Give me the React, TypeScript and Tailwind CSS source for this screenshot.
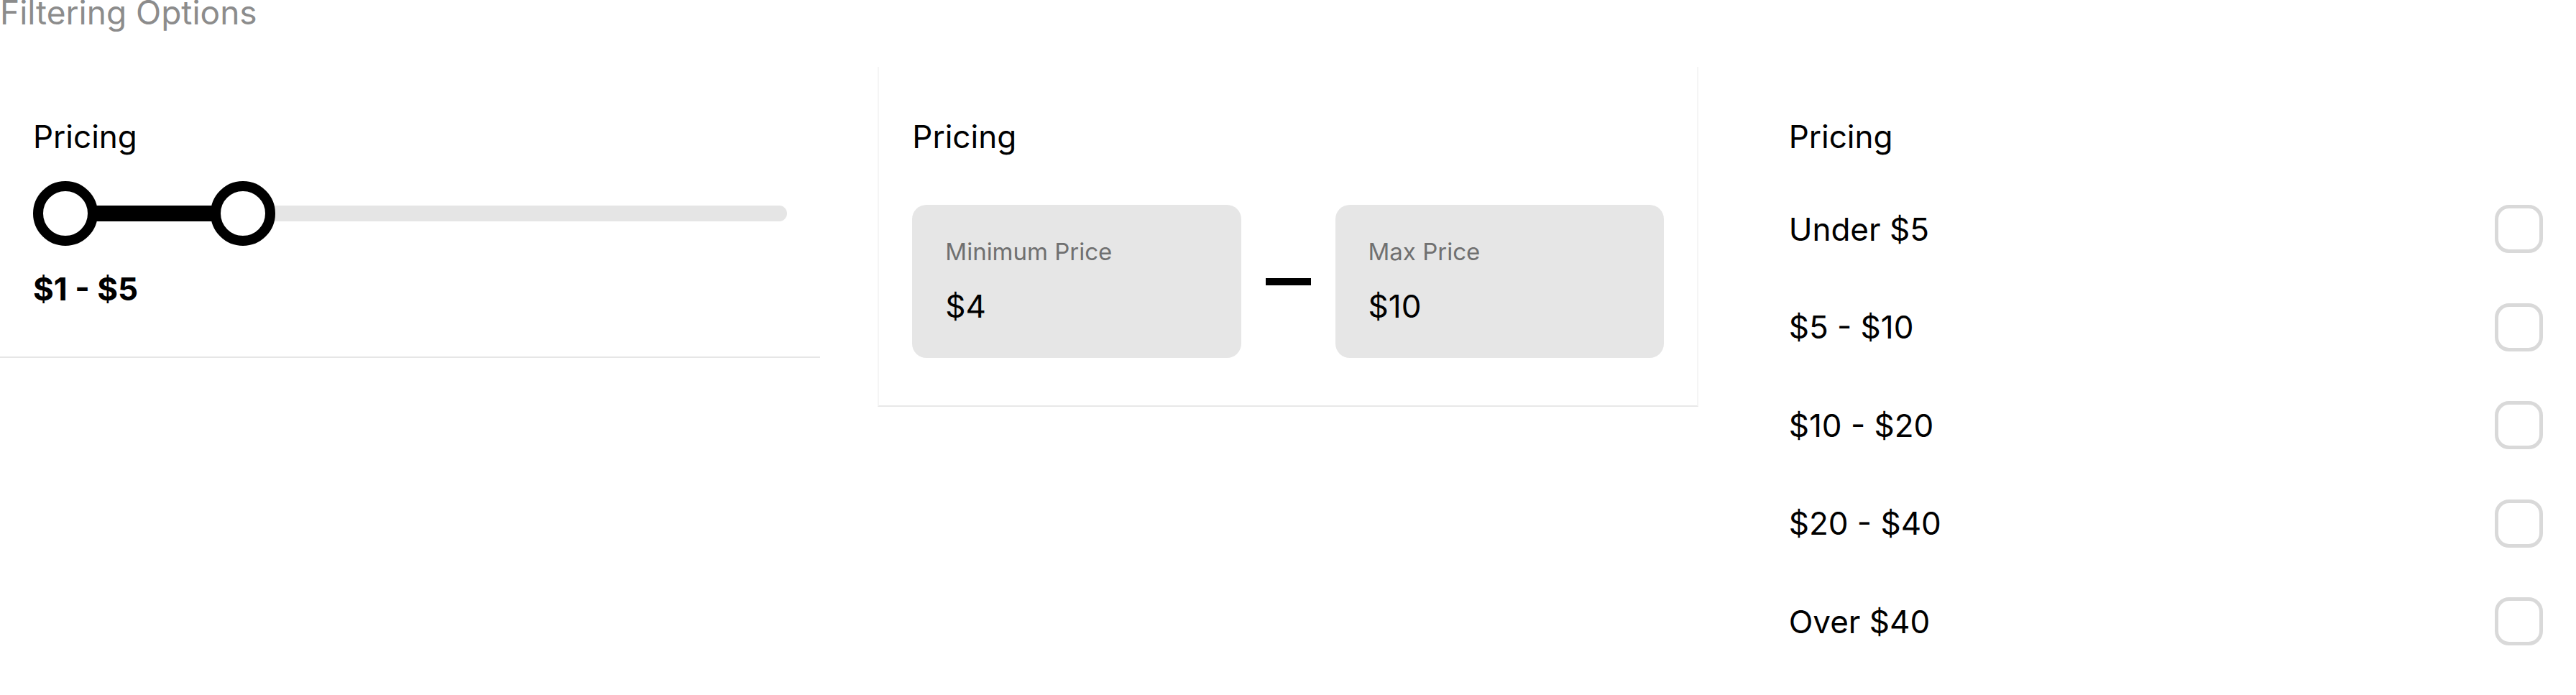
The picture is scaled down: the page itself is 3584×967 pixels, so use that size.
import React from 'react'

const ranges = ['Under $5', '$5 - $10', '$10 - $20', '$20 - $40', 'Over $40']

function PriceBox({ label, value }: { label: string; value: string }) {
  return (
    <div className="flex-1 rounded-[20px] bg-[#e6e6e6] px-[46px] pt-[45px] pb-[46px]">
      <p className="text-[33px] leading-[40px] text-[#707070]">{label}</p>
      <p className="mt-[30px] text-[44px] leading-[52px] text-black">{value}</p>
    </div>
  )
}

export default function App() {
  return (
    <div className="min-h-[967px] w-full overflow-hidden bg-white font-[Inter,sans-serif]">
      <h2 className="-mt-[6px] text-[46px] leading-[46px] text-[#8c8c8c]">Filtering Options</h2>

      <div className="mt-[53px] grid grid-cols-3 items-start gap-x-[80px]">
        {/* Slider */}
        <div className="border-b-2 border-[#e6e6e6] px-[46px] pt-[71px] pb-[68px]">
          <h3 className="text-[44px] leading-[52px] text-black">Pricing</h3>
          <div className="relative mt-[36px] flex h-[90px] items-center">
            <div className="h-[22px] w-full rounded-full bg-[#e5e5e5]" />
            <div className="absolute left-[44px] top-[34px] h-[22px] w-[250px] bg-black" />
            <div className="absolute left-0 top-0 h-[90px] w-[90px] rounded-full border-[14px] border-black bg-white" />
            <div className="absolute left-[247px] top-0 h-[90px] w-[90px] rounded-full border-[14px] border-black bg-white" />
          </div>
          <p className="mt-[34px] text-[44px] font-bold leading-[52px] text-black">$1 - $5</p>
        </div>

        {/* Min / max inputs */}
        <div className="border-x-2 border-b-2 border-x-[#f5f5f5] border-b-[#e8e8e8] px-[46px] pt-[71px] pb-[66px]">
          <h3 className="text-[44px] leading-[52px] text-black">Pricing</h3>
          <div className="mt-[69px] flex items-center">
            <PriceBox label="Minimum Price" value="$4" />
            <div className="mx-[34px] h-[10px] w-[63px] bg-black" />
            <PriceBox label="Max Price" value="$10" />
          </div>
        </div>

        {/* Checkbox list */}
        <div className="px-[46px] pt-[71px]">
          <h3 className="text-[44px] leading-[52px] text-black">Pricing</h3>
          <div className="mt-[69px] flex flex-col gap-[69.5px]">
            {ranges.map((r) => (
              <label key={r} className="flex h-[67px] items-center justify-between">
                <span className="text-[44px] leading-[52px] text-black">{r}</span>
                <span className="h-[67px] w-[67px] rounded-[20px] border-[5px] border-[#d9d9d9] bg-white" />
              </label>
            ))}
          </div>
        </div>
      </div>
    </div>
  )
}
